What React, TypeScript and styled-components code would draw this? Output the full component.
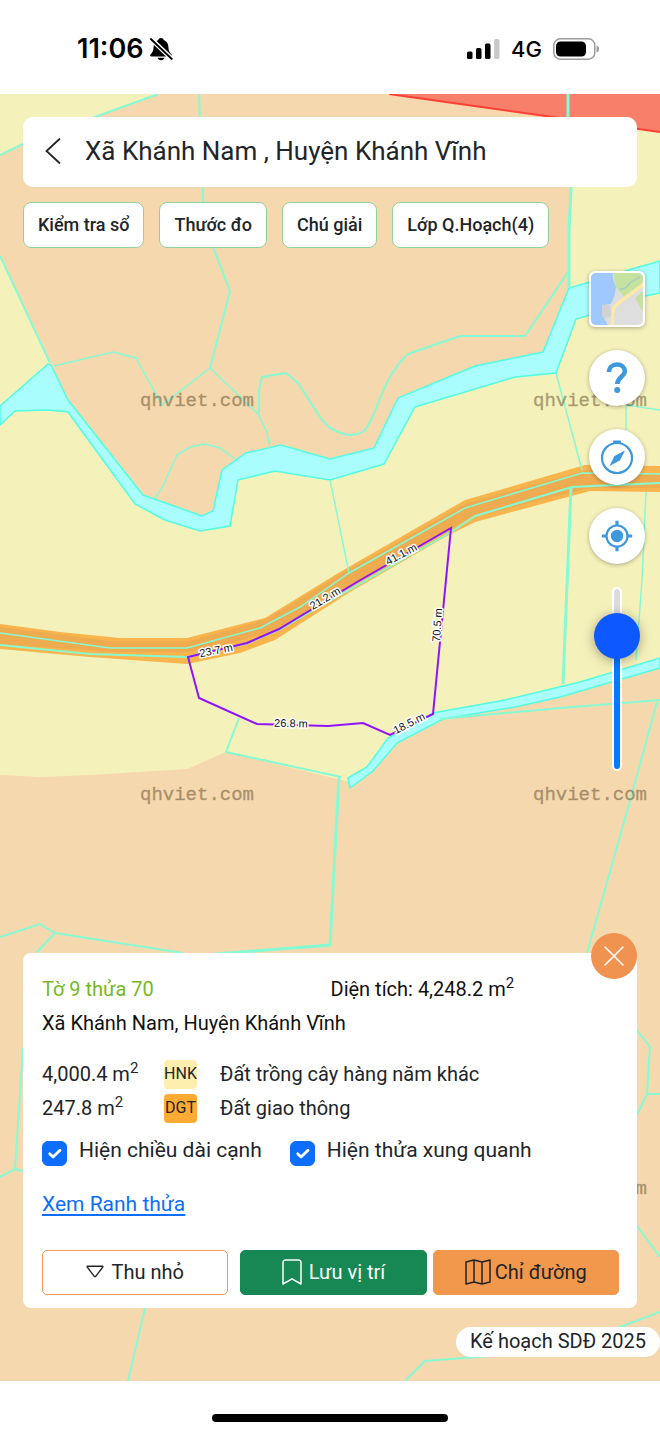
import React, { useState } from "react";
import styled, { createGlobalStyle, css } from "styled-components";

const GlobalStyle = createGlobalStyle`
  *, *::before, *::after { box-sizing: border-box; }
  body {
    margin: 0;
    background: #fff;
    color: #212529;
    font-family: Roboto, "Noto Sans", sans-serif;
    font-size: 20px;
    line-height: 34px;
  }
  button, input { font: inherit; color: inherit; margin: 0; }
  button { cursor: pointer; }
  svg { display: block; }
`;

const Screen = styled.div`
  display: flex;
  flex-direction: column;
  min-height: 100vh;
`;

const StatusBar = styled.header`
  display: flex;
  align-items: center;
  justify-content: space-between;
  height: 94px;
  padding: 4px 60px 0 77px;
  color: #000;
  font-family: Inter, sans-serif;
`;

const StatusGroup = styled.div<{ $gap: number }>`
  display: flex;
  align-items: center;
  gap: ${(p) => p.$gap}px;
`;

const Clock = styled.time`
  font-size: 27px;
  font-weight: 600;
`;

const Network = styled.span`
  font-size: 22px;
  font-weight: 500;
`;

const MapArea = styled.main`
  position: relative;
  display: flex;
  flex: 1;
  flex-direction: column;
  background: #f6d8ae;
  overflow: hidden;
`;

const MapCanvas = styled.svg`
  position: absolute;
  inset: 0;
  width: 100%;
  height: 100%;
`;

const Overlay = styled.div`
  position: relative;
  display: flex;
  flex: 1;
  flex-direction: column;
  padding-top: 23px;
`;

const TitleBar = styled.div`
  display: flex;
  align-items: center;
  height: 70px;
  margin: 0 23px;
  padding: 0 0 2px 18px;
  border-radius: 10px;
  background: #fff;
`;

const BackButton = styled.button`
  display: grid;
  place-items: center;
  width: 24px;
  height: 40px;
  margin-right: 20px;
  padding: 0;
  border: 0;
  background: none;
`;

const Title = styled.h1`
  margin: 0;
  font-size: 26px;
  font-weight: 400;
  line-height: 36px;
`;

const Chips = styled.nav`
  display: flex;
  gap: 15px;
  margin: 15px 23px 0;
`;

const Chip = styled.button`
  height: 46px;
  padding: 0 14px;
  border: 1px solid #8fd39c;
  border-radius: 8px;
  background: #fff;
  font-size: 18px;
  font-weight: 500;
  white-space: nowrap;
`;

const Tools = styled.div`
  display: flex;
  flex-direction: column;
  align-items: center;
  align-self: flex-end;
  gap: 23px;
  width: 56px;
  margin: 23px 15px 0 0;
`;

const ToolButton = styled.button<{ $square?: boolean }>`
  display: grid;
  place-items: center;
  width: 56px;
  height: 56px;
  padding: 0;
  border: 0;
  border-radius: ${(p) => (p.$square ? 6 : 28)}px;
  background: #fff;
  box-shadow: 0 1px 4px rgba(0, 0, 0, 0.3);
`;

const track = css`
  width: 10px;
  height: 184px;
  border: 2px solid #fff;
  border-radius: 5px;
`;

const ZoomSlider = styled.input`
  appearance: none;
  display: flex;
  writing-mode: vertical-lr;
  direction: rtl;
  justify-content: center;
  width: 10px;
  height: 184px;
  background: none;
  outline: 0;
  &::-webkit-slider-runnable-track {
    ${track}
    background: linear-gradient(to top, #007aff 75%, #dcdcdc 75%);
  }
  &::-webkit-slider-thumb {
    appearance: none;
    width: 46px;
    height: 46px;
    margin-left: -20px;
    border-radius: 23px;
    background: #0d58ff;
    box-shadow: 0 2px 12px rgba(0, 0, 0, 0.35);
  }
`;

const ParcelCard = styled.section`
  position: relative;
  margin: auto 23px 0;
  padding: 19px 18px 13px 19px;
  border-radius: 8px;
  background: #fff;
`;

const CloseButton = styled.button`
  position: absolute;
  top: -20px;
  right: 0;
  display: grid;
  place-items: center;
  width: 46px;
  height: 46px;
  padding: 0;
  border: 0;
  border-radius: 23px;
  background: #f09350;
`;

const Summary = styled.div`
  display: grid;
  grid-template-columns: 1fr 1fr;
  color: #111;
`;

const ParcelName = styled.h2`
  margin: 0;
  color: #77b81e;
  font: inherit;
`;

const Line = styled.p`
  margin: 0;
`;

const Place = styled(Line)`
  color: #111;
`;

const Sup = styled.sup`
  font-size: 15px;
  line-height: 0;
`;

const LandTable = styled.table`
  width: 100%;
  margin-top: 17px;
  border-collapse: collapse;
  td {
    height: 34px;
    padding: 0;
  }
  td:nth-child(1) { width: 122px; }
  td:nth-child(2) { width: 56px; }
`;

const Code = styled.span<{ $color: string }>`
  display: block;
  width: 33px;
  height: 29px;
  border-radius: 4px;
  background: ${(p) => p.$color};
  font-size: 16px;
  line-height: 27px;
  text-align: center;
`;

const Checks = styled.div`
  display: flex;
  flex-wrap: wrap;
  gap: 28px;
  margin-top: 8px;
`;

const CheckLabel = styled.label`
  display: flex;
  align-items: flex-start;
  gap: 12px;
  font-size: 21px;
`;

const CheckHolder = styled.span`
  display: grid;
  margin-top: 8px;
  > * { grid-area: 1 / 1; }
  svg { pointer-events: none; }
`;

const CheckBox = styled.input`
  appearance: none;
  width: 25px;
  height: 25px;
  border: 1px solid #0d6efd;
  border-radius: 6px;
  &:checked { background: #0d6efd; }
`;

const BorderLink = styled.a`
  display: inline-block;
  margin-top: 20px;
  color: #0d6efd;
  font-size: 21px;
  text-underline-offset: 3px;
`;

const Actions = styled.div`
  display: flex;
  gap: 6px;
  margin-top: 29px;
`;

const Action = styled.button<{ $fill: string; $edge: string; $ink: string; $gap: number }>`
  display: flex;
  flex: 1;
  align-items: center;
  justify-content: center;
  gap: ${(p) => p.$gap}px;
  height: 45px;
  padding: 0 0 2px;
  border: 1px solid ${(p) => p.$edge};
  border-radius: 5px;
  background: ${(p) => p.$fill};
  color: ${(p) => p.$ink};
  white-space: nowrap;
  &:first-child { margin-right: 6px; }
`;

const PlanBadge = styled.div`
  align-self: flex-end;
  height: 30px;
  margin: 19px 0 24px;
  padding: 0 14px;
  border-radius: 15px;
  background: #fff;
  line-height: 29px;
`;

const HomeArea = styled.footer`
  display: grid;
  place-items: center;
  height: 53px;
  padding-top: 20px;
`;

const HomeIndicator = styled.div`
  width: 236px;
  height: 8px;
  border-radius: 4px;
  background: #000;
`;

const BellOff = () => (
  <svg width="24" height="24" viewBox="0 0 24 24" aria-label="Im lặng">
    <path d="M12 1c-1.500 0-2.500.8-2.800 2C6.200 4.200 4.700 6.900 4.600 10c-.1 4-1.200 5.400-3 7.300-.8 1-.4 2.100.9 2.100h19c1.300 0 1.700-1.100.9-2.100-1.800-1.900-2.900-3.300-3-7.300-.1-3.100-1.600-5.800-4.600-7-.3-1.200-1.300-2-2.800-2zM8.500 20.800c.4 1.400 1.700 2.400 3.500 2.400s3.100-1 3.500-2.400z" fill="#000" />
    <path d="M1 1L23.500 22.500" stroke="#fff" strokeWidth="4.600" />
    <path d="M1.800 2L22.800 22" stroke="#000" strokeWidth="1.800" strokeLinecap="round" />
  </svg>
);

const Signal = () => (
  <svg width="33" height="21" viewBox="0 0 33 21" aria-label="Sóng">
    <rect x="0" y="12.500" width="5.500" height="7.500" rx="1.500" />
    <rect x="9" y="9" width="5.500" height="11" rx="1.500" />
    <rect x="18" y="4.500" width="5.500" height="15.500" rx="1.500" />
    <rect x="27" y="0" width="5.500" height="20" rx="1.500" fill="#c9c9c9" />
  </svg>
);

const Battery = () => (
  <svg width="47" height="22" viewBox="0 0 47 22" aria-label="Pin">
    <rect x="0.800" y="0.800" width="41" height="20.400" rx="6.500" fill="none" stroke="#9c9c9c" strokeWidth="1.500" />
    <rect x="3" y="3.500" width="30" height="15" rx="4.500" />
    <path d="M43.500 7.500c1.700.5 2.500 1.900 2.500 3.500s-.8 3-2.500 3.500z" fill="#9c9c9c" />
  </svg>
);

const BackIcon = () => (
  <svg width="18" height="28" viewBox="0 0 18 28" fill="none" stroke="#212529" strokeWidth="1.800" strokeLinecap="round">
    <path d="M15.500 2L2.500 14l13 12" />
  </svg>
);

const MapThumb = () => (
  <svg width="52" height="52" viewBox="0 0 52 52">
    <defs>
      <clipPath id="thumb"><rect width="52" height="52" rx="5" /></clipPath>
    </defs>
    <g clipPath="url(#thumb)">
      <rect width="52" height="52" fill="#dedede" />
      <path d="M22 0h30v13L33 24 25 14z" fill="#c5e2a0" />
      <path d="M52 18l-8 7 8 14z" fill="#c5e2a0" />
      <path d="M0 0h22c-1 5 1 8 3 14-1 6-1 9-5 17l-9 1v10l6 10H0z" fill="#9fc9fe" />
      <path d="M11 32h8l2 11-7 2-3-3z" fill="#d2d2d2" />
      <path d="M29 16c6 1 8-4 11-7l9-5" fill="none" stroke="#a9cfc0" strokeWidth="1.500" />
      <path d="M53 11C39 22 27 29 23 35c-2 4-1 12-2 18" fill="none" stroke="#fce9a6" strokeWidth="3.500" />
    </g>
  </svg>
);

const QuestionIcon = () => (
  <svg width="24" height="32" viewBox="0 0 24 32">
    <path d="M4 10c0-4.500 3.400-7.500 8-7.500s7.800 2.700 7.800 6.800c0 5.200-7.500 6-7.500 12.700" fill="none" stroke="#3e98dc" strokeWidth="4.500" />
    <circle cx="12.200" cy="28" r="3" fill="#3e98dc" />
  </svg>
);

const CompassIcon = () => (
  <svg width="34" height="36" viewBox="0 0 34 36">
    <circle cx="17" cy="19" r="15" fill="none" stroke="#3e98dc" strokeWidth="2.200" />
    <path d="M13 4V2.500Q13 1.500 14 1.500h6q1 0 1 1V4z" fill="#3e98dc" />
    <path d="M25 11.500L19.800 21.500 9.500 27l5-10z" fill="#3e98dc" />
  </svg>
);

const LocateIcon = () => (
  <svg width="32" height="32" viewBox="0 0 32 32" fill="none" stroke="#3e98dc">
    <circle cx="16" cy="16" r="10.500" strokeWidth="2.200" />
    <circle cx="16" cy="16" r="6.200" fill="#3e98dc" stroke="none" />
    <path d="M16 .8v5M16 26.200v5M.8 16h5M26.200 16h5" strokeWidth="3.200" />
  </svg>
);

const CloseIcon = () => (
  <svg width="20" height="20" viewBox="0 0 20 20" stroke="#fff" strokeWidth="1.600" strokeLinecap="round">
    <path d="M1 1l18 18M19 1L1 19" />
  </svg>
);

const CheckIcon = () => (
  <svg width="25" height="25" viewBox="0 0 25 25" fill="none" stroke="#fff" strokeWidth="2.800" strokeLinecap="round" strokeLinejoin="round">
    <path d="M7.700 12.800l3.300 3.300 7-6.800" />
  </svg>
);

const CaretIcon = () => (
  <svg width="18" height="13" viewBox="0 0 18 13" fill="none" stroke="#212529" strokeWidth="1.400" strokeLinejoin="round">
    <path d="M1.500 1.200h15q.7.200.2 1L9.700 11.400q-.7.600-1.400 0L1.300 2.200q-.4-.8.200-1z" />
  </svg>
);

const BookmarkIcon = () => (
  <svg width="20" height="26" viewBox="0 0 20 26" fill="none" stroke="#fff" strokeWidth="1.500" strokeLinejoin="round">
    <path d="M1 25V3.500A2.500 2.500 0 0 1 3.500 1h13A2.500 2.500 0 0 1 19 3.500V25l-9-5.200z" />
  </svg>
);

const FoldedMapIcon = () => (
  <svg width="26" height="26" viewBox="0 0 26 26" fill="none" stroke="#212529" strokeWidth="1.500" strokeLinejoin="round">
    <path d="M1 3l8-2 8 2 8-2v22l-8 2-8-2-8 2zM9 1v22M17 3v22" />
  </svg>
);

const watermarks = [
  [140, 406],
  [533, 406],
  [140, 800],
  [533, 800],
  [533, 1194],
];

const sides = [
  { text: "41.1 m", x: 401, y: 554, turn: -28 },
  { text: "21.2 m", x: 325, y: 598, turn: -31 },
  { text: "23.7 m", x: 216, y: 650, turn: -11 },
  { text: "26.8 m", x: 291, y: 723, turn: 1 },
  { text: "18.5 m", x: 409, y: 723, turn: -27 },
  { text: "70.5 m", x: 437, y: 625, turn: -86 },
];

const riverNorth =
  "68,400 143,495 202,516 213,511 222,470 246,453 281,445 330,459 374,448 398,398 475,366 543,352 569,288";

const CadastralMap = ({ showLengths, showNeighbours }: { showLengths: boolean; showNeighbours: boolean }) => (
  <MapCanvas viewBox="0 94 660 1287" preserveAspectRatio="xMidYMin slice" aria-label="Bản đồ quy hoạch">
    <rect y="94" width="660" height="1287" fill="#f6d8ae" />
    <g fill="#f5f1bb">
      <path d="M0 94H158L95 117 23 144 0 155z" />
      <polygon points={`0,256 50,363 ${riverNorth} 571,190 568,94 660,94 660,662 560,690 440,716 393,740 350,782 226,752 187,769 90,775 40,777 0,775`} />
    </g>
    <path d="M389 94H660V132z" fill="#f8806b" />
    <path d="M389 94L660 132" stroke="#ff3f36" strokeWidth="2" />

    <path d="M0 624L60 632 120 638H187L265 618 340 572 465 500 585 465 660 466V492L590 491 475 522 445 537 350 592 275 640 240 653 187 664 90 657 0 649z" fill="#f8b44d" />
    <path d="M0 627L110 641H190L267 619 341 574 467 503 588 470 660 474V488H590L470 518 350 586 275 630 225 645 187 652 110 652 0 644z" fill="#efab50" />

    <polygon
      points={`0,406 48,364 51,365 ${riverNorth} 590,282 635,268 660,261 660,293 645,296 590,315 576,319 556,373 515,377 415,407 384,464 330,480 275,471 238,480 230,526 200,531 165,520 135,504 68,412 48,410 15,411 0,425`}
      fill="#a9fdfa"
      stroke="#52fde2"
      strokeWidth="1.500"
    />
    <path d="M660 658L580 682 505 700 433 713 388 738 367 767 348 778 350 788 373 771 397 743 443 719 515 707 560 697 660 668z" fill="#a9fdfa" stroke="#52fde2" strokeWidth="1.500" />

    {showNeighbours && (
      <g fill="none" stroke="#86fad3" strokeWidth="2">
        <path d="M0 155L23 144 95 117 158 94" />
        <path d="M0 256L50 363" />
        <path d="M199 94L203 200 213 247 230 291 210 368" />
        <path d="M568 94V120L571 190 569 230V288" strokeWidth="3" />
        <path d="M54 366L113 352 136 358 162 405 210 368 258 414 267 432 270 448" strokeWidth="1.500" />
        <path d="M259 413V390L262 377 286 373 298 383 322 420 330 428C345 436 355 438 365 430 378 415 380 380 408 354L460 336H525L568 272" />
        <path d="M155 498L162 488 177 455 190 447 205 444 220 448 235 459" strokeWidth="1.500" />
        <path d="M330 480L349 573M556 373L582 470M646 492L642 580 636 660M660 410L626 405V430" strokeWidth="1.500" />
        <path d="M571 487L563 684" strokeWidth="3" />
        <path d="M0 633L110 648H187L260 628 300 607 349 573 465 508 582 473 660 474" strokeWidth="1.500" />
        <path d="M0 645L90 654 187 657 248 643 280 629 451 532 475 516 572 487 660 483" />
        <path d="M239 718L226 752 341 777" />
        <path d="M339 776L330 945 215 954" strokeWidth="3" />
        <path d="M183 953L55 933 40 924 0 937M55 933L36 953" />
        <path d="M440 719L560 708 660 700M657 702L633 790 587 953" />
        <path d="M23 1048L15 1169 0 1177M15 1169L23 1171" />
        <path d="M637 1030L650 1047 647 1094 637 1115M647 1094H660M637 1226L660 1257" />
        <path d="M145 1308L128 1381M405 1381L425 1361 490 1356 620 1327 660 1312" />
      </g>
    )}

    <g fill="#5a4a2a" fillOpacity="0.450" fontFamily='"Liberation Mono", monospace' fontSize="19" stroke="#5a4a2a" strokeOpacity="0.200" strokeWidth="1">
      {watermarks.map(([x, y]) => (
        <text key={`${x}-${y}`} x={x} y={y}>qhviet.com</text>
      ))}
    </g>

    <path
      d="M451 528L433 714 390 735 363 723 328 726 257 724 199 698 188 657 247 643 279 629 357 582z"
      fill="none"
      stroke="#9013fe"
      strokeWidth="2"
    />
    {showLengths && (
      <g
        fill="#111"
        stroke="#fff"
        strokeWidth="3"
        paintOrder="stroke"
        strokeLinejoin="round"
        fontFamily='"Liberation Sans", sans-serif'
        fontSize="11"
        textAnchor="middle"
      >
        {sides.map((s) => (
          <text key={s.text} transform={`translate(${s.x} ${s.y}) rotate(${s.turn})`} y="4">{s.text}</text>
        ))}
      </g>
    )}
  </MapCanvas>
);

export default function App() {
  const [showLengths, setShowLengths] = useState(true);
  const [showNeighbours, setShowNeighbours] = useState(true);

  return (
    <Screen>
      <GlobalStyle />
      <StatusBar>
        <StatusGroup $gap={5}>
          <Clock>11:06</Clock>
          <BellOff />
        </StatusGroup>
        <StatusGroup $gap={11}>
          <Signal />
          <Network>4G</Network>
          <Battery />
        </StatusGroup>
      </StatusBar>

      <MapArea>
        <CadastralMap showLengths={showLengths} showNeighbours={showNeighbours} />
        <Overlay>
          <TitleBar>
            <BackButton aria-label="Quay lại"><BackIcon /></BackButton>
            <Title>Xã Khánh Nam , Huyện Khánh Vĩnh</Title>
          </TitleBar>
          <Chips>
            <Chip>Kiểm tra sổ</Chip>
            <Chip>Thước đo</Chip>
            <Chip>Chú giải</Chip>
            <Chip>Lớp Q.Hoạch(4)</Chip>
          </Chips>
          <Tools>
            <ToolButton $square aria-label="Loại bản đồ"><MapThumb /></ToolButton>
            <ToolButton aria-label="Trợ giúp"><QuestionIcon /></ToolButton>
            <ToolButton aria-label="La bàn"><CompassIcon /></ToolButton>
            <ToolButton aria-label="Vị trí của tôi"><LocateIcon /></ToolButton>
            <ZoomSlider type="range" min={0} max={100} defaultValue={82} aria-label="Độ trong suốt" />
          </Tools>

          <ParcelCard>
            <CloseButton aria-label="Đóng"><CloseIcon /></CloseButton>
            <Summary>
              <ParcelName>Tờ 9 thửa 70</ParcelName>
              <Line>Diện tích: 4,248.2 m<Sup>2</Sup></Line>
            </Summary>
            <Place>Xã Khánh Nam, Huyện Khánh Vĩnh</Place>
            <LandTable>
              <tbody>
                <tr>
                  <td>4,000.4 m<Sup>2</Sup></td>
                  <td><Code $color="#fdf0ae">HNK</Code></td>
                  <td>Đất trồng cây hàng năm khác</td>
                </tr>
                <tr>
                  <td>247.8 m<Sup>2</Sup></td>
                  <td><Code $color="#ffaa32">DGT</Code></td>
                  <td>Đất giao thông</td>
                </tr>
              </tbody>
            </LandTable>
            <Checks>
              <CheckLabel>
                <CheckHolder>
                  <CheckBox type="checkbox" checked={showLengths} onChange={(e) => setShowLengths(e.target.checked)} />
                  {showLengths && <CheckIcon />}
                </CheckHolder>
                Hiện chiều dài cạnh
              </CheckLabel>
              <CheckLabel>
                <CheckHolder>
                  <CheckBox type="checkbox" checked={showNeighbours} onChange={(e) => setShowNeighbours(e.target.checked)} />
                  {showNeighbours && <CheckIcon />}
                </CheckHolder>
                Hiện thửa xung quanh
              </CheckLabel>
            </Checks>
            <BorderLink href="#ranh-thua">Xem Ranh thửa</BorderLink>
            <Actions>
              <Action $fill="#fff" $edge="#f39a55" $ink="#212529" $gap={7}><CaretIcon />Thu nhỏ</Action>
              <Action $fill="#178754" $edge="#178754" $ink="#fff" $gap={7}><BookmarkIcon />Lưu vị trí</Action>
              <Action $fill="#f2984c" $edge="#f2984c" $ink="#212529" $gap={4}><FoldedMapIcon />Chỉ đường</Action>
            </Actions>
          </ParcelCard>
          <PlanBadge>Kế hoạch SDĐ 2025</PlanBadge>
        </Overlay>
      </MapArea>

      <HomeArea>
        <HomeIndicator />
      </HomeArea>
    </Screen>
  );
}
